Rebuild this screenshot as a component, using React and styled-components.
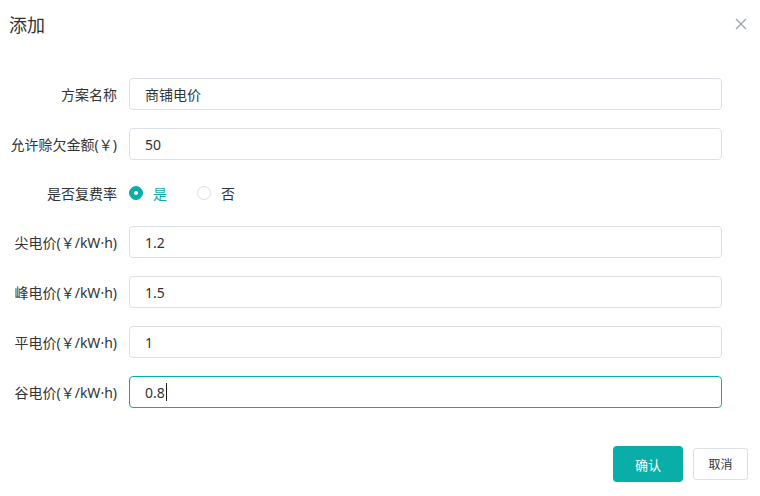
import React from "react";
import styled, { createGlobalStyle } from "styled-components";

const TEAL = "#0aaea8";

const GlobalStyle = createGlobalStyle`
  html, body {
    margin: 0;
    padding: 0;
    background: #fff;
    font-family: "Noto Sans", "Noto Sans CJK SC", sans-serif;
    color: #333;
  }
`;

const fields = [
  { label: "方案名称", value: "商铺电价" },
  { label: "允许赊欠金额(￥)", value: "50" },
  { type: "radio", label: "是否复费率" },
  { label: "尖电价(￥/kW·h)", value: "1.2" },
  { label: "峰电价(￥/kW·h)", value: "1.5" },
  { label: "平电价(￥/kW·h)", value: "1" },
  { label: "谷电价(￥/kW·h)", value: "0.8", active: true },
];

const App = () => {
  return (
    <Dialog>
      <GlobalStyle />
      <Header>
        <Title>添加</Title>
        <CloseBtn aria-label="close">
          <svg width="14" height="14" viewBox="0 0 14 14">
            <path d="M2 2 L12 12 M12 2 L2 12" stroke="#9aa0a8" strokeWidth="1.2" />
          </svg>
        </CloseBtn>
      </Header>
      <Form>
        {fields.map((f) =>
          f.type === "radio" ? (
            <Row key={f.label} $short>
              <Label>{f.label}</Label>
              <RadioGroup>
                <RadioItem $checked>
                  <RadioDot $checked />
                  是
                </RadioItem>
                <RadioItem>
                  <RadioDot />
                  否
                </RadioItem>
              </RadioGroup>
            </Row>
          ) : (
            <Row key={f.label}>
              <Label>{f.label}</Label>
              {f.active ? (
                <FocusedInput>
                  {f.value}
                  <Caret />
                </FocusedInput>
              ) : (
                <Input defaultValue={f.value} />
              )}
            </Row>
          )
        )}
      </Form>
      <Footer>
        <PrimaryButton>确认</PrimaryButton>
        <Button>取消</Button>
      </Footer>
    </Dialog>
  );
};

export default App;

const Dialog = styled.div`
  width: 760px;
  height: 496px;
  display: flex;
  flex-direction: column;
  box-sizing: border-box;
`;

const Header = styled.div`
  display: flex;
  align-items: center;
  justify-content: space-between;
  padding: 14px 12px 0 9px;
  height: 22px;
`;

const Title = styled.div`
  font-size: 18px;
  line-height: 22px;
  color: #303133;
`;

const CloseBtn = styled.div`
  width: 14px;
  height: 14px;
  display: flex;
  margin-top: -2px;
`;

const Form = styled.div`
  display: flex;
  flex-direction: column;
  gap: 18px;
  padding: 42px 38px 0 0;
`;

const Row = styled.div`
  display: flex;
  align-items: center;
  height: ${(p) => (p.$short ? "30px" : "32px")};
`;

const Label = styled.div`
  width: 117px;
  padding-right: 12px;
  text-align: right;
  font-size: 14px;
  color: #333;
  white-space: nowrap;
  flex-shrink: 0;
`;

const Input = styled.input`
  flex: 1;
  height: 32px;
  box-sizing: border-box;
  border: 1px solid #dcdfe6;
  border-radius: 4px;
  padding: 0 15px;
  font-size: 14px;
  font-family: inherit;
  color: #333;
  outline: none;
`;

const FocusedInput = styled.div`
  flex: 1;
  height: 32px;
  box-sizing: border-box;
  border: 1px solid ${TEAL};
  border-radius: 4px;
  padding: 0 15px;
  font-size: 14px;
  color: #333;
  display: flex;
  align-items: center;
`;

const Caret = styled.span`
  width: 1px;
  height: 18px;
  background: #222;
  margin-left: 1px;
`;

const RadioGroup = styled.div`
  display: flex;
  align-items: center;
  gap: 30px;
`;

const RadioItem = styled.label`
  display: flex;
  align-items: center;
  gap: 10px;
  font-size: 14px;
  color: ${(p) => (p.$checked ? TEAL : "#333")};
`;

const RadioDot = styled.span`
  width: 14px;
  height: 14px;
  box-sizing: border-box;
  border-radius: 50%;
  border: 1px solid ${(p) => (p.$checked ? TEAL : "#dcdfe6")};
  background: ${(p) => (p.$checked ? TEAL : "#fff")};
  display: flex;
  align-items: center;
  justify-content: center;
  &::after {
    content: "";
    width: 4px;
    height: 4px;
    border-radius: 50%;
    background: #fff;
    display: ${(p) => (p.$checked ? "block" : "none")};
  }
`;

const Footer = styled.div`
  display: flex;
  justify-content: flex-end;
  align-items: center;
  gap: 10px;
  padding: 0 12px;
  margin-top: 38px;
`;

const PrimaryButton = styled.button`
  width: 70px;
  height: 36px;
  border: none;
  border-radius: 4px;
  background: ${TEAL};
  color: #fff;
  font-size: 13px;
  font-family: inherit;
`;

const Button = styled.button`
  width: 55px;
  height: 32px;
  border: 1px solid #dcdfe6;
  border-radius: 3px;
  background: #fff;
  color: #333;
  font-size: 12px;
  font-family: inherit;
`;
